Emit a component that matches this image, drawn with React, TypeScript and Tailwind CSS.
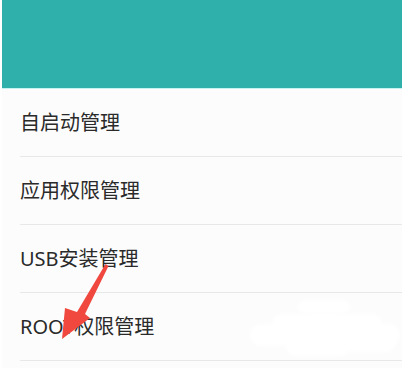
const items = ["自启动管理", "应用权限管理", "USB安装管理", "ROOT权限管理"];

const Arrow = () => (
  <svg
    className="pointer-events-none absolute left-0 top-0"
    width="404"
    height="368"
    viewBox="0 0 404 368"
  >
    <path
      d="M105.5 264 L108.5 266 L85 314 L90 318 L62 339 L65 308 L77 312 Z"
      fill="#f0483f"
    />
  </svg>
);

export default function App() {
  return (
    <div
      className="relative h-[368px] w-[404px] overflow-hidden bg-white"
      style={{ fontFamily: '"Noto Sans", "Noto Sans CJK SC", sans-serif' }}
    >
      <div className="mx-[2px] bg-[#fcfcfc]">
        <div className="h-[88px] bg-[#2fb0ab]" />
        <div className="h-px bg-[#c6f3f1]" />
        <ul>
          {items.map((item) => (
            <li key={item} className="pl-[18px]">
              <div className="flex h-[68px] items-center border-b border-[#e8e8e8] text-[20px] text-[#2a2a2a]">
                {item}
              </div>
            </li>
          ))}
        </ul>
        <div className="h-[8px]" />
      </div>

      {/* erased marks over the last row */}
      <div className="pointer-events-none absolute left-[298px] top-[300px] h-[14px] w-[52px] rounded-full bg-white blur-[2px]" />
      <div className="pointer-events-none absolute left-[272px] top-[314px] h-[18px] w-[110px] rounded-full bg-white blur-[2px]" />
      <div className="pointer-events-none absolute left-[250px] top-[324px] h-[22px] w-[150px] rounded-full bg-white blur-[2px]" />
      <div className="pointer-events-none absolute left-[285px] top-[336px] h-[16px] w-[110px] rounded-full bg-white blur-[2px]" />
      <div className="pointer-events-none absolute left-[288px] top-[342px] h-[14px] w-[60px] rounded-full bg-white blur-[2px]" />

      <Arrow />
    </div>
  );
}
